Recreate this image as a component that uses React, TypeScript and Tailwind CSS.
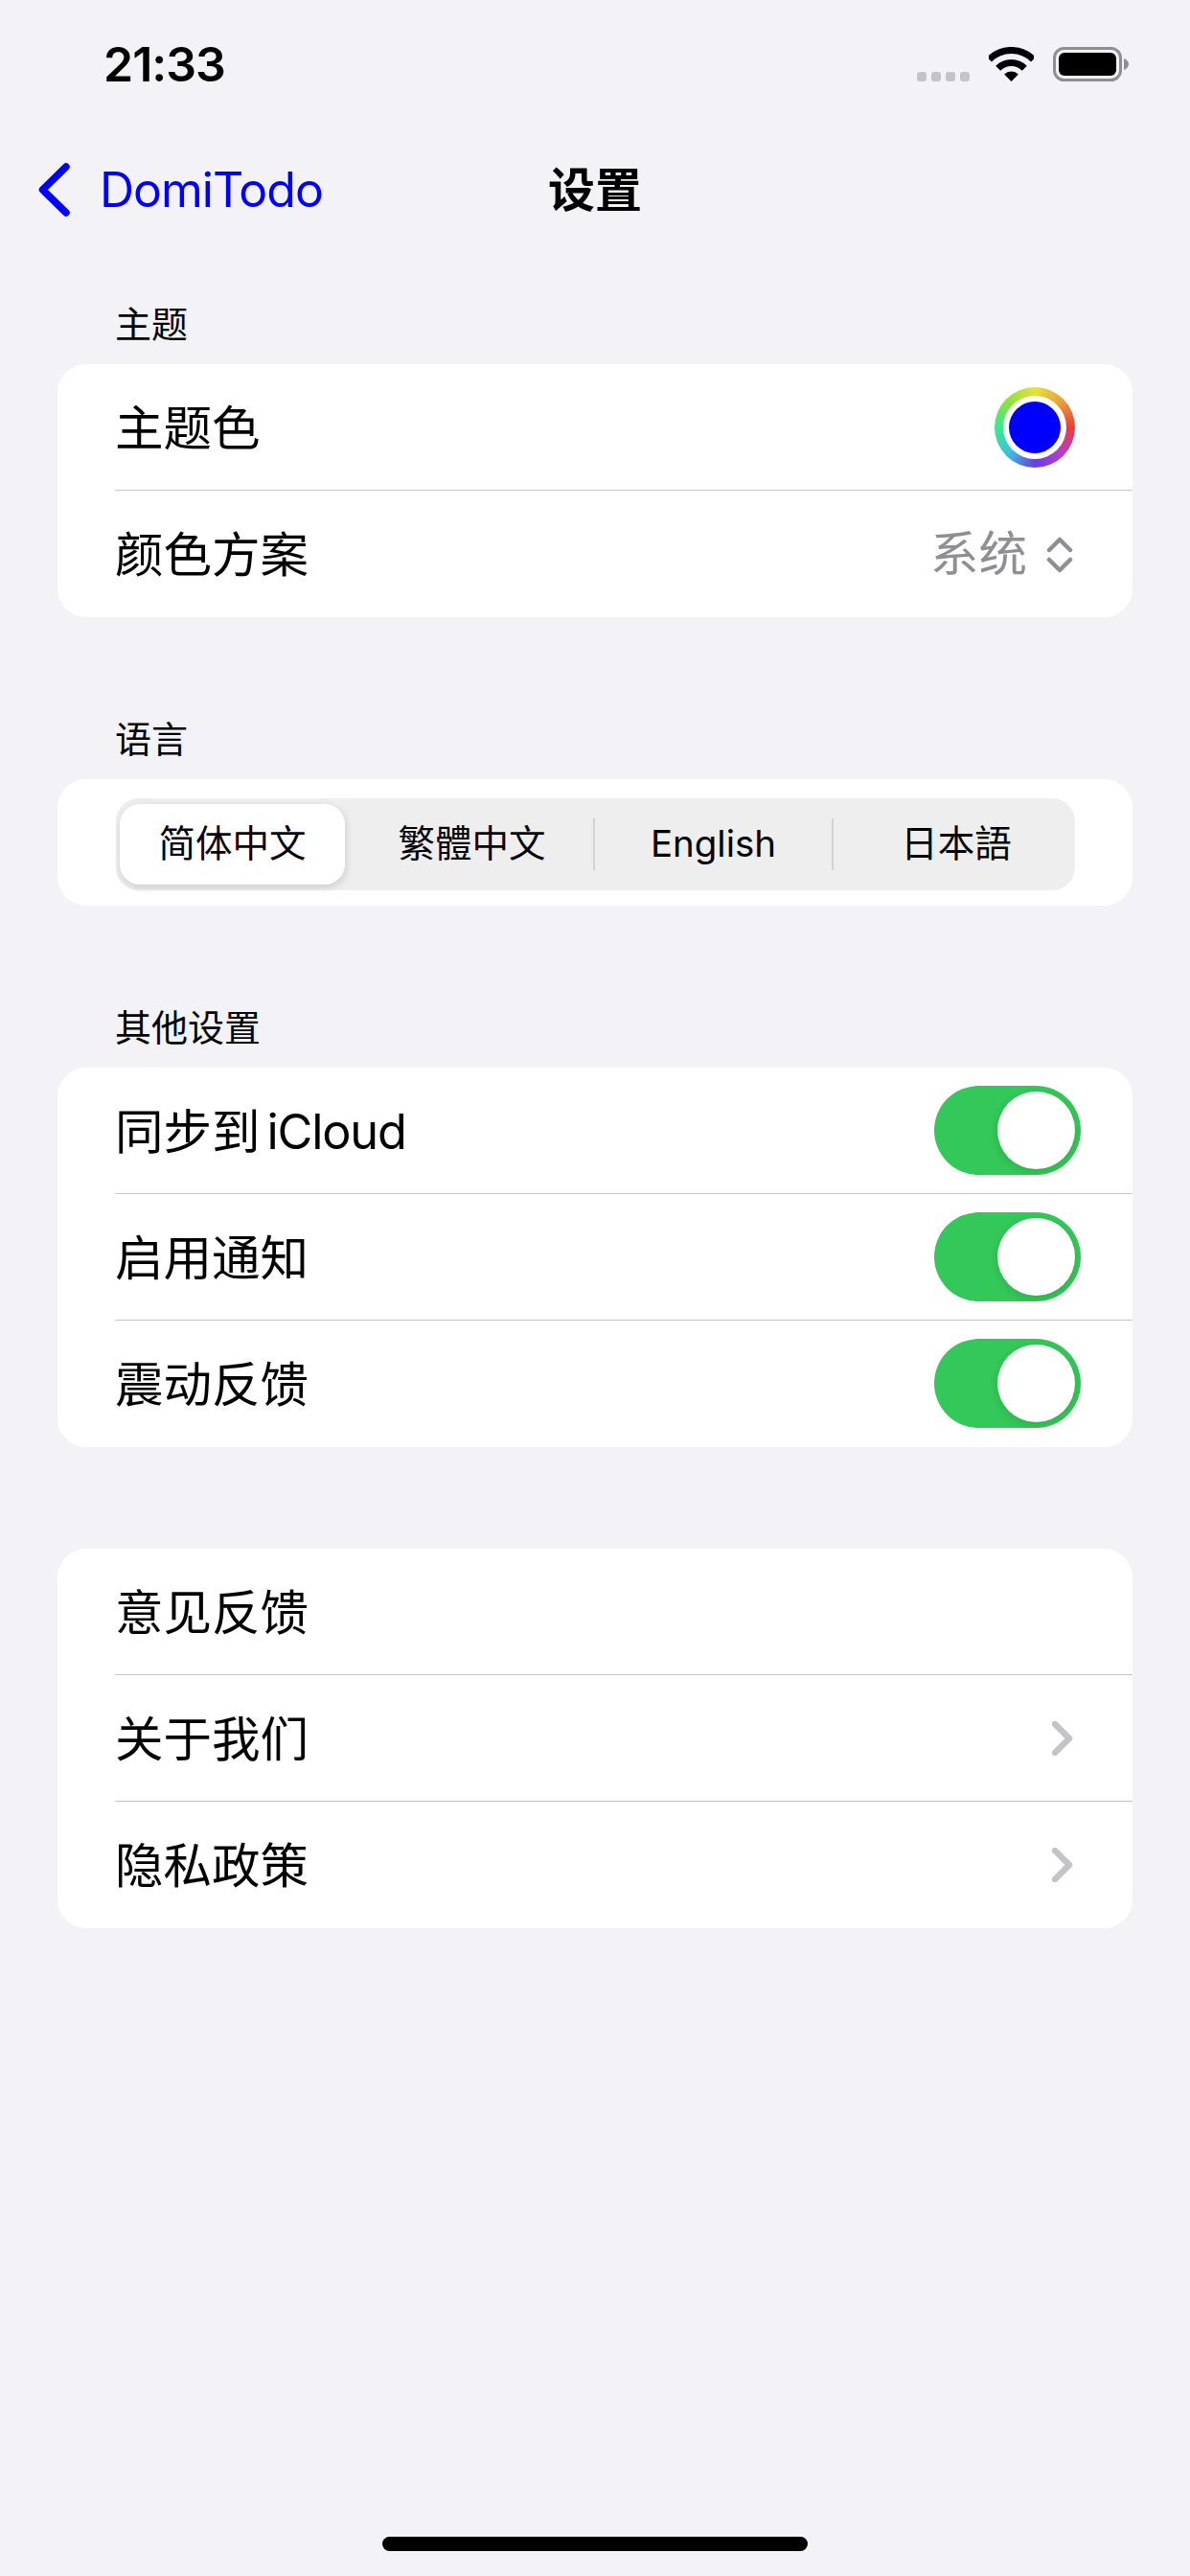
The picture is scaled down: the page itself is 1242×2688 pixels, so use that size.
import type { ReactNode } from "react";

const font = { fontFamily: '"Inter", "Noto Sans CJK SC", sans-serif' };

const Wifi = () => (
  <svg width="47" height="36" viewBox="0 0 47 36" fill="none">
    <path d="M0.5 13 A32.5 32.5 0 0 1 46.5 13" stroke="#000" strokeWidth="7" />
    <path d="M9.7 22.2 A19.5 19.5 0 0 1 37.3 22.2" stroke="#000" strokeWidth="7" />
    <path d="M23.5 36 L16.1 28.6 A10.5 10.5 0 0 1 30.9 28.6 Z" fill="#000" />
  </svg>
);

const Battery = () => (
  <svg width="79" height="36" viewBox="0 0 79 36" fill="none">
    <rect x="1.5" y="1.5" width="69" height="33" rx="10" stroke="#8e8e93" strokeWidth="3" />
    <rect x="6" y="6" width="60" height="24" rx="6" fill="#000" />
    <path d="M74 12 C77 13 79 15.5 79 18 C79 20.5 77 23 74 24 Z" fill="#8e8e93" />
  </svg>
);

const ChevronRight = () => (
  <svg width="22" height="36" viewBox="0 0 22 36" fill="none" className="mr-[2px]">
    <path d="M3 3 L18 18 L3 33" stroke="#c4c4c6" strokeWidth="6.5" strokeLinecap="round" strokeLinejoin="round" />
  </svg>
);

const UpDown = () => (
  <svg width="28" height="40" viewBox="0 0 28 40" fill="none" className="mr-[2px]">
    <path d="M3 15 L14 4 L25 15" stroke="#8e8e93" strokeWidth="4.5" strokeLinecap="round" strokeLinejoin="round" />
    <path d="M3 25 L14 36 L25 25" stroke="#8e8e93" strokeWidth="4.5" strokeLinecap="round" strokeLinejoin="round" />
  </svg>
);

const Toggle = () => (
  <div className="-mr-[6px] flex h-[93px] w-[153px] items-center justify-end rounded-full bg-[#34c759] pr-[6px]">
    <div className="h-[81px] w-[81px] rounded-full bg-white shadow-[0_3px_10px_rgba(0,0,0,0.12)]" />
  </div>
);

const ColorWheel = () => (
  <div className="flex h-[84px] w-[84px] items-center justify-center rounded-full bg-[conic-gradient(#e4e23c,#e8a23c,#e83c3c,#b83cd0,#6a3ce0,#3cc0e0,#3ce890,#90e03c,#e4e23c)]">
    <div className="flex h-[66px] w-[66px] items-center justify-center rounded-full bg-white">
      <div className="h-[54px] w-[54px] rounded-full bg-[#0000ff]" />
    </div>
  </div>
);

const Row = ({ label, children }: { label: ReactNode; children?: ReactNode }) => (
  <div className="flex h-[131px] items-center justify-between pl-[60px] pr-[60px]">
    <span className="pt-[4px] text-[50.5px] leading-none text-black">{label}</span>
    {children}
  </div>
);

const Divider = () => <div className="ml-[60px] h-px bg-[#c6c6c8]" />;

const SectionLabel = ({ children }: { children: string }) => (
  <div className="flex h-[84px] items-center pl-[60px] text-[38px] text-black">{children}</div>
);

const Card = ({ children }: { children: ReactNode }) => (
  <div className="overflow-hidden rounded-[30px] bg-white pb-px">{children}</div>
);

export default function App() {
  return (
    <div style={font} className="flex min-h-[2688px] w-[1242px] flex-col bg-[#f2f2f7]">
      <div className="flex h-[134px] items-center justify-between pl-[108px] pr-[64px]">
        <span className="text-[50px] font-semibold leading-none tracking-[-1px] text-black">21:33</span>
        <div className="flex items-center gap-[20px]">
          <div className="flex gap-[5px] self-end">
            <div className="h-[10px] w-[10px] rounded-[3px] bg-[#c4c4c8]" />
            <div className="h-[10px] w-[10px] rounded-[3px] bg-[#c4c4c8]" />
            <div className="h-[10px] w-[10px] rounded-[3px] bg-[#c4c4c8]" />
            <div className="h-[10px] w-[10px] rounded-[3px] bg-[#c4c4c8]" />
          </div>
          <Wifi />
          <Battery />
        </div>
      </div>

      <div className="grid h-[128px] grid-cols-[1fr_auto_1fr] items-center">
        <div className="flex items-center gap-[31px] pl-[40px]">
          <svg width="33" height="56" viewBox="0 0 33 56" fill="none">
            <path d="M29 4 L4.5 28 L29 52" stroke="#0000ff" strokeWidth="7.5" strokeLinecap="round" strokeLinejoin="round" />
          </svg>
          <span className="text-[50px] leading-none tracking-[-1px] text-[#0000ff]">DomiTodo</span>
        </div>
        <span className="text-[49px] font-bold leading-none text-black">设置</span>
        <div />
      </div>

      <div className="mt-[34px] flex flex-col px-[60px]">
        <SectionLabel>主题</SectionLabel>
        <Card>
          <Row label="主题色">
            <ColorWheel />
          </Row>
          <Divider />
          <Row label="颜色方案">
            <div className="flex items-center gap-[20px] pt-[2px] text-[50.5px] leading-none text-[#8e8e93]">
              <span>系统</span>
              <UpDown />
            </div>
          </Row>
        </Card>

        <div className="mt-[85px]">
          <SectionLabel>语言</SectionLabel>
        </div>
        <Card>
          <div className="flex h-[131px] items-center pl-[61px] pr-[60px] pt-[4px]">
            <div className="flex h-[96px] w-full items-center rounded-[24px] bg-[#eeeeef] pl-[4px] pr-[4px] text-[38.5px] text-black">
              <div className="flex h-[84px] w-[235px] items-center justify-center rounded-[21px] bg-white shadow-[1px_3px_8px_rgba(0,0,0,0.14)]">
                简体中文
              </div>
              <div className="flex w-[259px] items-center justify-center pl-[6px]">繁體中文</div>
              <div className="h-[54px] w-[2px] bg-[#d2d2d4]" />
              <div className="flex w-[247px] items-center justify-center">English</div>
              <div className="h-[54px] w-[2px] bg-[#d2d2d4]" />
              <div className="flex flex-1 items-center justify-center pl-[8px]">日本語</div>
            </div>
          </div>
        </Card>

        <div className="mt-[85px]">
          <SectionLabel>其他设置</SectionLabel>
        </div>
        <Card>
          <Row
            label={
              <>
                同步到<span className="ml-[7px] tracking-[-1.2px]">iCloud</span>
              </>
            }
          >
            <Toggle />
          </Row>
          <Divider />
          <Row label="启用通知">
            <Toggle />
          </Row>
          <Divider />
          <Row label="震动反馈">
            <Toggle />
          </Row>
        </Card>

        <div className="mt-[106px]">
          <Card>
            <Row label="意见反馈" />
            <Divider />
            <Row label="关于我们">
              <ChevronRight />
            </Row>
            <Divider />
            <Row label="隐私政策">
              <ChevronRight />
            </Row>
          </Card>
        </div>
      </div>

      <div className="mt-auto flex justify-center pb-[26px]">
        <div className="h-[15px] w-[444px] rounded-full bg-black" />
      </div>
    </div>
  );
}
